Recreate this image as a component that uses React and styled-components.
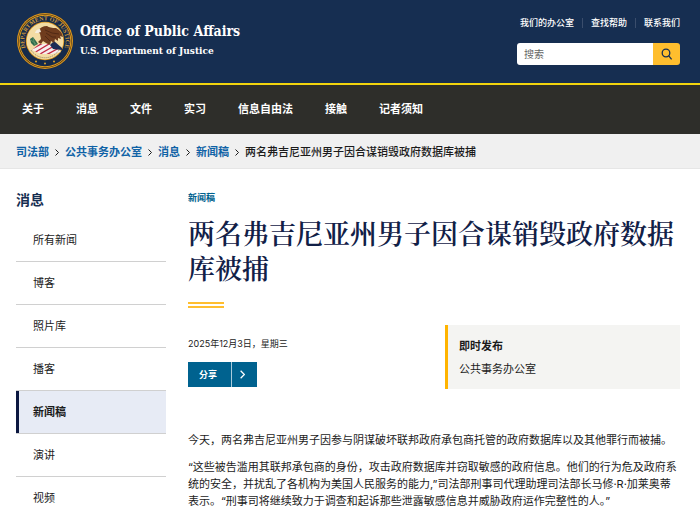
import React from "react";
import styled, { createGlobalStyle } from "styled-components";

const navItems = ["关于", "消息", "文件", "实习", "信息自由法", "接触", "记者须知"];
const crumbs = ["司法部", "公共事务办公室", "消息", "新闻稿"];
const sideItems = ["所有新闻", "博客", "照片库", "播客", "新闻稿", "演讲", "视频"];

const Chevron = ({ width, height }) => (
  <svg width={width} height={height} viewBox="0 0 4 7" fill="none" stroke="currentColor" strokeWidth="1" aria-hidden="true">
    <path d="M0.5 0.5 L3.5 3.5 L0.5 6.5" />
  </svg>
);

const Seal = () => (
  <svg width="58" height="58" viewBox="0 0 58 58" aria-hidden="true">
    <defs>
      <path id="sealText" d="M11 39 A20.6 20.6 0 1 1 47 39" />
      <clipPath id="sealShield">
        <path d="M16 38 L23 32 L36 32 L45 40 L36 42 L25 42 Z" />
      </clipPath>
    </defs>
    <circle cx="29" cy="29" r="28" fill="#d9941c" />
    <circle cx="29" cy="29" r="26.8" fill="#3c2c18" />
    <circle cx="29" cy="29" r="26.3" fill="#e09b1f" />
    <circle cx="29" cy="29" r="25.3" fill="#152a4a" />
    <circle cx="29" cy="29" r="19.2" fill="#d9941c" />
    <circle cx="29" cy="29" r="18.4" fill="#f3dca4" />
    <text fontFamily="Liberation Serif, serif" fontSize="6" fontWeight="700" fill="#cf9a3e">
      <textPath href="#sealText" startOffset="50%" textAnchor="middle">DEPARTMENT OF JUSTICE</textPath>
    </text>
    <g clipPath="url(#sealShield)">
      <rect x="15" y="30" width="32" height="15" fill="#f6eeee" />
      <path d="M16 37 L27 31 M18 41 L33 32 M24 42 L38 34 M30 43 L43 36" stroke="#c22b42" strokeWidth="1.4" />
    </g>
    <path d="M38 29 L46 36 L46 38 L37 37 L34 33 Z" fill="#1c2d56" />
    <path d="M14 27 L17 25 L20 29 L22 32 L18 34 L15 31 Z" fill="#2f6b4c" />
    <path d="M15 28 L20 32 M17 26 L19 33" stroke="#6a9c70" strokeWidth="0.7" />
    <path
      d="M22 19 Q25 14 31 14 Q34 16 40 16 Q46 19 47 25 L44 24 L45 27 L42 26 L42 29 L39 27 L38 31 L35 29 L34 33 L30 31 L27 29 L25 32 L22 30 L25 27 L24 22 Z"
      fill="#6f3c1e"
    />
    <path d="M29 18 L36 21 L43 22 M30 21 L36 25 L40 25 M29 24 L34 29" stroke="#4a2513" strokeWidth="0.8" fill="none" />
    <path d="M19 21 Q20 17 24 17 L25 20 L22 21 Z" fill="#f5eee0" />
    <path d="M15 38 A16.5 16.5 0 0 0 43 38" stroke="#8d7b55" strokeWidth="1" strokeDasharray="1 1" fill="none" />
    <circle cx="20" cy="49.5" r="1" fill="#e0a22c" />
    <circle cx="29" cy="51.5" r="1" fill="#e0a22c" />
    <circle cx="38" cy="49.5" r="1" fill="#e0a22c" />
  </svg>
);

const App = () => {
  return (
    <>
      <GlobalStyle />
      <Header>
        <Brand href="#">
          <Seal />
          <BrandText>
            <strong>Office of Public Affairs</strong>
            <span>U.S. Department of Justice</span>
          </BrandText>
        </Brand>
        <HeaderTools>
          <TopLinks>
            <a href="#">我们的办公室</a>
            <a href="#">查找帮助</a>
            <a href="#">联系我们</a>
          </TopLinks>
          <SearchForm role="search">
            <SearchInput type="search" placeholder="搜索" aria-label="搜索" />
            <SearchButton type="button" aria-label="搜索">
              <svg width="12" height="12" viewBox="0 0 12 12" fill="none" stroke="currentColor" strokeWidth="1.3">
                <circle cx="5" cy="5" r="3.8" />
                <path d="M7.8 7.8 L10.6 11.4" />
              </svg>
            </SearchButton>
          </SearchForm>
        </HeaderTools>
      </Header>
      <Nav>
        {navItems.map((item) => (
          <a href="#" key={item}>{item}</a>
        ))}
      </Nav>
      <Breadcrumb>
        {crumbs.map((item) => (
          <li key={item}>
            <a href="#">{item}</a>
            <Chevron width="4" height="7" />
          </li>
        ))}
        <li>两名弗吉尼亚州男子因合谋销毁政府数据库被捕</li>
      </Breadcrumb>
      <Page>
        <aside>
          <SideTitle>消息</SideTitle>
          <SideList>
            {sideItems.map((item) => (
              <li key={item}>
                <SideLink href="#" $active={item === "新闻稿"}>{item}</SideLink>
              </li>
            ))}
          </SideList>
        </aside>
        <main>
          <Kicker>新闻稿</Kicker>
          <Title>两名弗吉尼亚州男子因合谋销毁政府数据库被捕</Title>
          <Rule />
          <Meta>
            <div>
              <DateText>2025年12月3日，星期三</DateText>
              <ShareButton type="button">
                <span>分享</span>
                <ShareArrow>
                  <Chevron width="5" height="9" />
                </ShareArrow>
              </ShareButton>
            </div>
            <Release>
              <strong>即时发布</strong>
              <span>公共事务办公室</span>
            </Release>
          </Meta>
          <Body>
            <p>今天，两名弗吉尼亚州男子因参与阴谋破坏联邦政府承包商托管的政府数据库以及其他罪行而被捕。</p>
            <p>
              “这些被告滥用其联邦承包商的身份，攻击政府数据库并窃取敏感的政府信息。他们的行为危及政府系统的安全，并扰乱了各机构为美国人民服务的能力,”司法部刑事司代理助理司法部长马修·R·加莱奥蒂表示。“刑事司将继续致力于调查和起诉那些泄露敏感信息并威胁政府运作完整性的人。”
            </p>
          </Body>
        </main>
      </Page>
    </>
  );
};

export default App;

const GlobalStyle = createGlobalStyle`
  * {
    box-sizing: border-box;
  }
  body {
    margin: 0;
    background: #ffffff;
    color: #1b1b1b;
    font-family: Inter, "Noto Sans CJK SC", sans-serif;
    font-size: 11px;
    line-height: 17px;
  }
  a {
    color: inherit;
    text-decoration: none;
  }
  h1, h2, p, ul, ol {
    margin: 0;
    padding: 0;
  }
  ul, ol {
    list-style: none;
  }
`;

const Header = styled.header`
  display: flex;
  justify-content: space-between;
  padding: 12px 20px 13px 16px;
  background: #162e51;
  border-bottom: 2px solid #f2d40d;
`;

const Brand = styled.a`
  display: flex;
  align-items: center;
  gap: 6px;
  color: #ffffff;
`;

const BrandText = styled.span`
  display: flex;
  flex-direction: column;
  gap: 2px;
  font-family: "DejaVu Serif Condensed", "DejaVu Serif", serif;
  font-weight: 700;

  strong {
    font-size: 14px;
    line-height: 18px;
  }
  span {
    font-size: 10px;
    line-height: 18px;
  }
`;

const HeaderTools = styled.div`
  display: flex;
  flex-direction: column;
  gap: 15px;
  padding-top: 6px;
`;

const TopLinks = styled.nav`
  display: flex;
  justify-content: flex-end;
  align-items: center;
  color: #ffffff;
  font-size: 9px;
  font-weight: 500;

  a {
    line-height: 10px;
  }
  a + a {
    margin-left: 8px;
    padding-left: 8px;
    border-left: 1px solid #3a4d6c;
  }
`;

const SearchForm = styled.form`
  display: flex;
  width: 163px;
  height: 22px;
  border-radius: 3px;
  overflow: hidden;
`;

const SearchInput = styled.input`
  flex: 1;
  min-width: 0;
  padding: 0 7px;
  border: 0;
  background: #ffffff;
  font-family: inherit;
  font-size: 10px;

  &::placeholder {
    color: #666666;
  }
`;

const SearchButton = styled.button`
  display: flex;
  align-items: center;
  justify-content: center;
  width: 27px;
  padding: 0;
  border: 0;
  background: #ffbe2e;
  color: #162e51;
`;

const Nav = styled.nav`
  display: flex;
  gap: 32px;
  padding: 16px 22px;
  background: #2e2e2a;
  color: #ffffff;
  font-weight: 700;
`;

const Breadcrumb = styled.ol`
  display: flex;
  padding: 10px 16px 7px;
  background: #f0f0f0;
  border-bottom: 1px solid #e6e6e6;
  font-weight: 500;

  li {
    display: flex;
    align-items: center;
  }
  a {
    color: #0f62a6;
    font-weight: 700;
  }
  svg {
    margin: 0 6px;
  }
`;

const Page = styled.div`
  display: grid;
  grid-template-columns: 150px 1fr;
  gap: 22px;
  padding: 20px 20px 0 16px;
`;

const SideTitle = styled.h2`
  margin-bottom: 8px;
  color: #162e51;
  font-size: 14px;
  font-weight: 700;
  line-height: 22px;
`;

const SideList = styled.ul`
  li + li {
    border-top: 1px solid #d0d0d0;
  }
`;

const SideLink = styled.a`
  display: block;
  padding: 0 17px;
  line-height: 42px;
  background: ${(props) => (props.$active ? "#e7ebf5" : "transparent")};
  font-weight: ${(props) => (props.$active ? 700 : 400)};
  box-shadow: ${(props) => (props.$active ? "inset 3px 0 0 #0b1740" : "none")};
`;

const Kicker = styled.p`
  color: #00628f;
  font-size: 9px;
  font-weight: 700;
  line-height: 17px;
`;

const Title = styled.h1`
  margin: 9px 0 17px;
  color: #112047;
  font-family: "Noto Serif CJK SC", "Noto Serif SC", "Noto Sans CJK SC", serif;
  font-size: 27px;
  font-weight: 600;
  line-height: 35px;
`;

const Rule = styled.div`
  width: 36px;
  height: 6px;
  border: solid #ffbe2e;
  border-width: 2px 0;
`;

const Meta = styled.div`
  display: grid;
  grid-template-columns: 1fr 235px;
  align-items: start;
  margin-top: 17px;
`;

const DateText = styled.p`
  margin: 10px 0;
  font-size: 9px;
`;

const ShareButton = styled.button`
  display: flex;
  align-items: center;
  height: 25px;
  padding: 0;
  border: 0;
  background: #00628f;
  color: #ffffff;
  font-family: inherit;
  font-size: 9px;
  font-weight: 700;

  > span:first-child {
    width: 43px;
    padding-left: 11px;
    text-align: left;
  }
`;

const ShareArrow = styled.span`
  display: flex;
  align-items: center;
  height: 25px;
  padding: 0 12px 0 8px;
  border-left: 1px solid #a9cbdc;
`;

const Release = styled.div`
  display: flex;
  flex-direction: column;
  gap: 6px;
  padding: 13px 11px 11px;
  background: #f4f4f2;
  border-left: 3px solid #ffb400;
`;

const Body = styled.div`
  display: flex;
  flex-direction: column;
  gap: 10px;
  margin-top: 43px;
`;
